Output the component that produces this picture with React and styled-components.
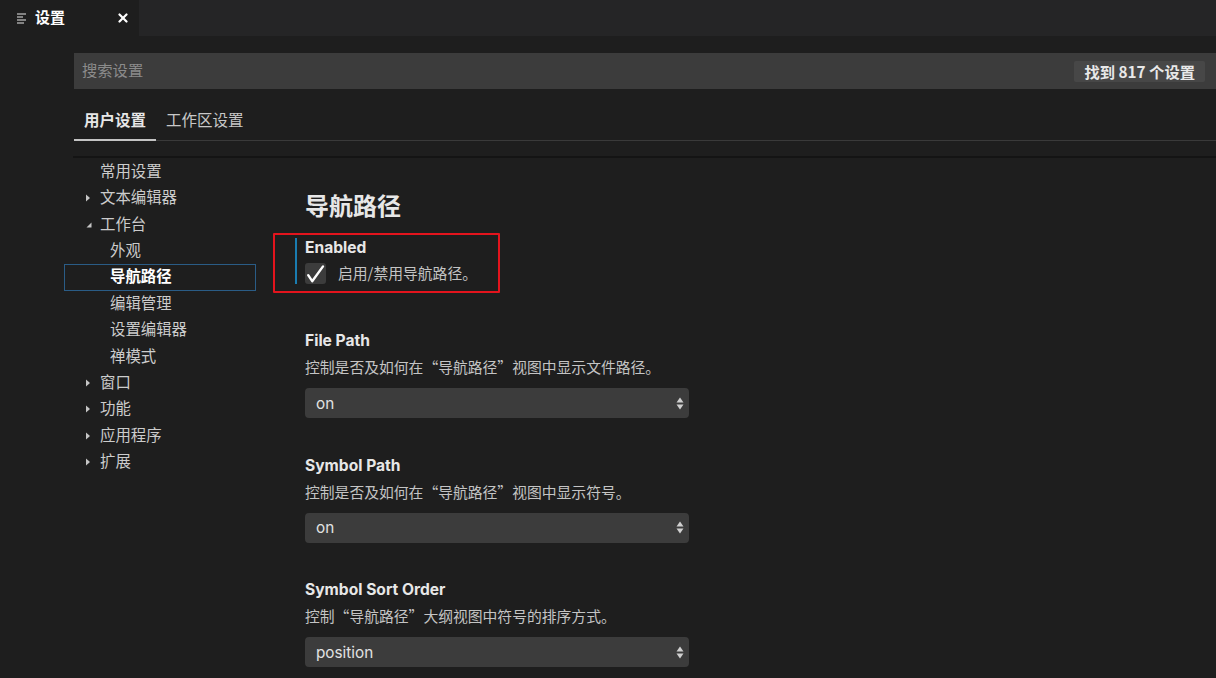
import styled, { createGlobalStyle } from "styled-components";

const GlobalStyle = createGlobalStyle`
  html, body {
    margin: 0;
    padding: 0;
    background: #1e1e1e;
    height: 678px;
    overflow: hidden;
  }
  body {
    font-family: "Liberation Sans", "Noto Sans CJK SC", sans-serif;
    color: #cccccc;
  }
`;

const cjk = `"Noto Sans CJK SC", "Liberation Sans", sans-serif`;
const latin = `Inter, "Liberation Sans", "Noto Sans CJK SC", sans-serif`;

const tocItems = [
  { label: "常用设置", level: 0 },
  { label: "文本编辑器", level: 0, arrow: "right" },
  { label: "工作台", level: 0, arrow: "down" },
  { label: "外观", level: 1 },
  { label: "导航路径", level: 1, selected: true },
  { label: "编辑管理", level: 1 },
  { label: "设置编辑器", level: 1 },
  { label: "禅模式", level: 1 },
  { label: "窗口", level: 0, arrow: "right" },
  { label: "功能", level: 0, arrow: "right" },
  { label: "应用程序", level: 0, arrow: "right" },
  { label: "扩展", level: 0, arrow: "right" },
];

const selectSettings = [
  {
    title: "File Path",
    desc: "控制是否及如何在“导航路径”视图中显示文件路径。",
    value: "on",
  },
  {
    title: "Symbol Path",
    desc: "控制是否及如何在“导航路径”视图中显示符号。",
    value: "on",
  },
  {
    title: "Symbol Sort Order",
    desc: "控制“导航路径”大纲视图中符号的排序方式。",
    value: "position",
  },
];

const PreviewIcon = () => (
  <svg width="10" height="11" viewBox="0 0 10 11">
    <g stroke="#c5c5c5" strokeWidth="1.2">
      <line x1="0" y1="1" x2="9" y2="1" />
      <line x1="0" y1="4" x2="6" y2="4" />
      <line x1="0" y1="7" x2="9" y2="7" />
      <line x1="0" y1="10" x2="7" y2="10" />
    </g>
  </svg>
);

const CloseIcon = () => (
  <svg width="10" height="10" viewBox="0 0 10 10">
    <g stroke="#ffffff" strokeWidth="2.2" strokeLinecap="round">
      <line x1="1.5" y1="1.5" x2="8.5" y2="8.5" />
      <line x1="8.5" y1="1.5" x2="1.5" y2="8.5" />
    </g>
  </svg>
);

const Arrow = ({ dir }) =>
  dir === "down" ? (
    <svg width="6" height="6" viewBox="0 0 6 6">
      <path d="M5.5 0.5 L5.5 5.5 L0.5 5.5 Z" fill="#c5c5c5" />
    </svg>
  ) : (
    <svg width="6" height="8" viewBox="0 0 6 8">
      <path d="M1 0.5 L5 4 L1 7.5 Z" fill="#c5c5c5" />
    </svg>
  );

const CheckMark = () => (
  <svg width="21" height="21" viewBox="0 0 21 21">
    <path
      d="M3.2 12.2 L7.2 18.2 L18 3.4"
      fill="none"
      stroke="#ffffff"
      strokeWidth="2.4"
      strokeLinecap="round"
      strokeLinejoin="round"
    />
  </svg>
);

const UpDown = () => (
  <svg width="8" height="13" viewBox="0 0 8 13">
    <path d="M4 0.5 L7.5 5.5 L0.5 5.5 Z" fill="#d0d0d0" />
    <path d="M4 12.5 L7.5 7.5 L0.5 7.5 Z" fill="#d0d0d0" />
  </svg>
);

const App = () => {
  return (
    <>
      <GlobalStyle />
      <Page>
        <TabBar>
          <EditorTab>
            <PreviewIcon />
            <TabTitle>设置</TabTitle>
            <TabClose>
              <CloseIcon />
            </TabClose>
          </EditorTab>
        </TabBar>

        <Editor>
          <SearchBar>
            <SearchPlaceholder>搜索设置</SearchPlaceholder>
            <CountBadge>找到 817 个设置</CountBadge>
          </SearchBar>

          <ScopeTabs>
            <ScopeTab $active>用户设置</ScopeTab>
            <ScopeTab>工作区设置</ScopeTab>
          </ScopeTabs>

          <SettingsBody>
            <Toc>
              {tocItems.map((item) => (
                <TocItem
                  key={item.label}
                  $level={item.level}
                  $selected={item.selected}
                >
                  {item.arrow && (
                    <TocArrow $dir={item.arrow}>
                      <Arrow dir={item.arrow} />
                    </TocArrow>
                  )}
                  {item.label}
                </TocItem>
              ))}
            </Toc>

            <SettingsList>
              <GroupTitle>导航路径</GroupTitle>

              <SettingItem $focused $gap={47}>
                <Annotation />
                <SettingTitle>Enabled</SettingTitle>
                <CheckRow>
                  <CheckBox>
                    <CheckMark />
                  </CheckBox>
                  <CheckLabel>启用/禁用导航路径。</CheckLabel>
                </CheckRow>
              </SettingItem>

              {selectSettings.map((setting) => (
                <SettingItem key={setting.title} $gap={37.5}>
                  <SettingTitle>{setting.title}</SettingTitle>
                  <SettingDesc>{setting.desc}</SettingDesc>
                  <SelectBox>
                    <span>{setting.value}</span>
                    <UpDown />
                  </SelectBox>
                </SettingItem>
              ))}
            </SettingsList>
          </SettingsBody>
        </Editor>
      </Page>
    </>
  );
};

const Page = styled.div`
  width: 1216px;
  height: 678px;
  display: flex;
  flex-direction: column;
  overflow: hidden;
`;

const TabBar = styled.div`
  height: 36px;
  background: #252526;
  display: flex;
  flex-shrink: 0;
`;

const EditorTab = styled.div`
  width: 139px;
  background: #1e1e1e;
  display: flex;
  align-items: center;
  padding-left: 17px;
  box-sizing: border-box;
`;

const TabTitle = styled.span`
  margin-left: 8px;
  font-size: 15px;
  font-weight: bold;
  color: #ffffff;
  line-height: 20px;
`;

const TabClose = styled.span`
  margin-left: 53px;
  display: flex;
  align-items: center;
`;

const Editor = styled.div`
  flex: 1;
  display: flex;
  flex-direction: column;
  padding: 17px 0 0 64px;
  min-height: 0;
`;

const SearchBar = styled.div`
  margin-left: 10px;
  height: 36px;
  background: #3c3c3c;
  display: flex;
  align-items: center;
  justify-content: space-between;
  padding: 0 11px 0 8px;
  flex-shrink: 0;
`;

const SearchPlaceholder = styled.span`
  font-size: 15.3px;
  color: #8b8b8b;
  line-height: 20px;
`;

const CountBadge = styled.span`
  height: 21px;
  line-height: 21px;
  padding: 0 10px;
  background: #474747;
  border-radius: 2px;
  font-family: ${cjk};
  font-size: 15.3px;
  font-weight: bold;
  color: #e8e8e8;
`;

const ScopeTabs = styled.div`
  margin-left: 10px;
  height: 51px;
  display: flex;
  align-items: flex-end;
  border-bottom: 1px solid #3a3a3a;
  flex-shrink: 0;
`;

const ScopeTab = styled.div`
  padding: 0 10px;
  height: 36px;
  line-height: 32px;
  font-size: 15.5px;
  font-weight: ${({ $active }) => ($active ? "bold" : "normal")};
  color: ${({ $active }) => ($active ? "#e7e7e7" : "#c8c8c8")};
  box-sizing: border-box;
  margin-bottom: -1px;
  border-bottom: 2px solid
    ${({ $active }) => ($active ? "#c4c4c4" : "transparent")};
`;

const SettingsBody = styled.div`
  margin-top: 15px;
  border-top: 2px solid #141414;
  margin-left: 9px;
  display: flex;
  flex: 1;
  min-height: 0;
`;

const Toc = styled.div`
  width: 192px;
  margin-left: -9px;
  flex-shrink: 0;
  display: flex;
  flex-direction: column;
  padding-top: 1px;
`;

const TocItem = styled.div`
  position: relative;
  height: 26.36px;
  line-height: 24px;
  box-sizing: border-box;
  padding-left: ${({ $level }) => ($level ? 45 : 35)}px;
  font-size: 15.4px;
  font-weight: ${({ $selected }) => ($selected ? "bold" : "normal")};
  color: ${({ $selected }) => ($selected ? "#ffffff" : "#cccccc")};
  border: 1px solid
    ${({ $selected }) => ($selected ? "#2a5c86" : "transparent")};
`;

const TocArrow = styled.span`
  position: absolute;
  left: ${({ $dir }) => ($dir === "down" ? 21 : 20)}px;
  top: ${({ $dir }) => ($dir === "down" ? 9 : 8)}px;
  display: flex;
`;

const SettingsList = styled.div`
  flex: 1;
  padding: 32px 0 0 39px;
  display: flex;
  flex-direction: column;
  align-items: flex-start;
`;

const GroupTitle = styled.div`
  margin-left: 10px;
  font-size: 24px;
  line-height: 34px;
  font-weight: bold;
  color: #e7e7e7;
  margin-bottom: 14px;
`;

const SettingItem = styled.div`
  position: relative;
  border-left: 2px solid
    ${({ $focused }) => ($focused ? "#1a7cb0" : "transparent")};
  padding-left: 8px;
  margin-bottom: ${({ $gap }) => $gap}px;
  display: flex;
  flex-direction: column;
`;

const Annotation = styled.div`
  position: absolute;
  left: -24px;
  top: -5px;
  width: 223px;
  height: 56px;
  border: 2px solid #e3141d;
  border-radius: 1px;
  pointer-events: none;
`;

const SettingTitle = styled.div`
  font-family: ${latin};
  font-size: 15.6px;
  line-height: 20px;
  font-weight: 700;
  color: #e7e7e7;
`;

const SettingDesc = styled.div`
  margin-top: 6px;
  font-family: ${cjk};
  font-size: 14.8px;
  line-height: 20px;
  color: #c4c4c4;
`;

const CheckRow = styled.div`
  margin-top: 4px;
  display: flex;
  align-items: center;
  height: 22px;
`;

const CheckBox = styled.div`
  width: 21px;
  height: 21px;
  background: #3c3c3c;
  border-radius: 3px;
  display: flex;
`;

const CheckLabel = styled.span`
  margin-left: 12px;
  font-family: ${cjk};
  font-size: 14.8px;
  line-height: 20px;
  color: #c4c4c4;
`;

const SelectBox = styled.div`
  margin-top: 11px;
  width: 384px;
  height: 30px;
  box-sizing: border-box;
  background: #3c3c3c;
  border-radius: 4px;
  padding: 0 5px 0 11px;
  display: flex;
  align-items: center;
  justify-content: space-between;
  font-family: ${latin};
  font-size: 15.3px;
  color: #e2e2e2;
`;

export default App;
